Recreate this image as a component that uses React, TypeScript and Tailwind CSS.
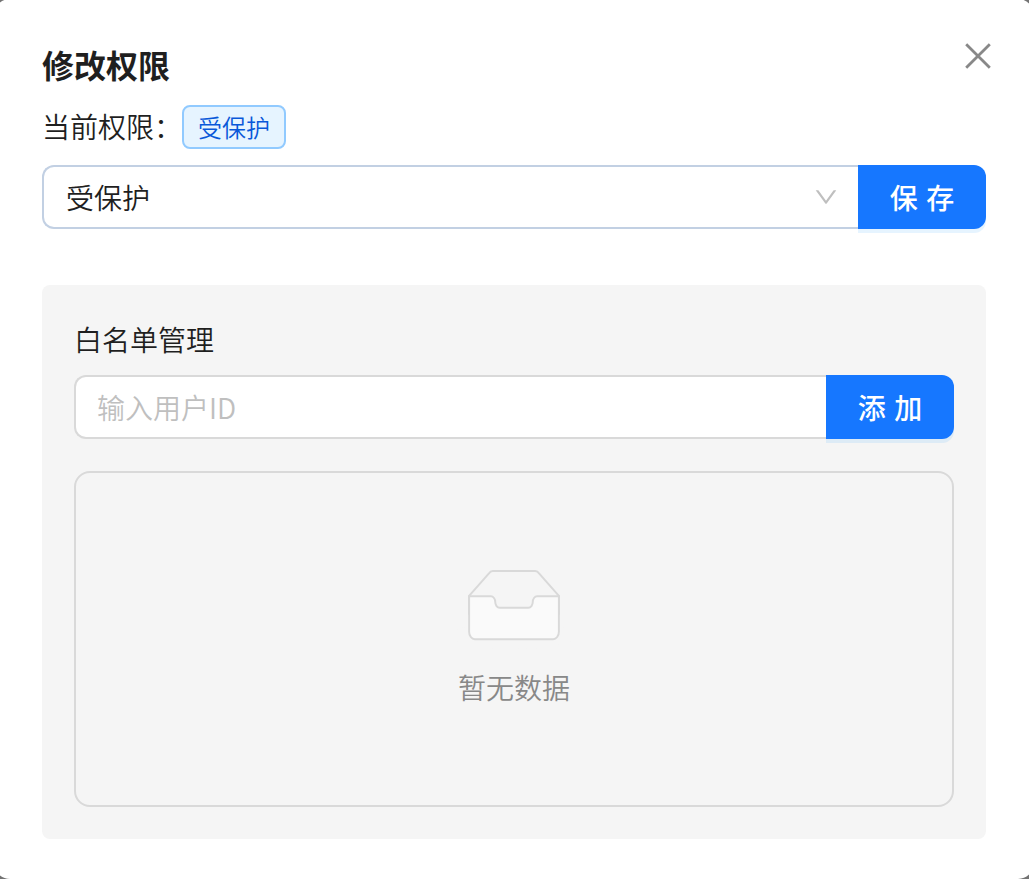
import type { ReactNode } from "react";

const PrimaryButton = ({ children }: { children: ReactNode }) => (
  <button className="w-32 h-16 shrink-0 rounded-r-xl bg-[#1677ff] pt-0.5 text-white text-[28px] leading-[44px] font-medium whitespace-nowrap [word-spacing:1px] shadow-[0_4px_0_rgba(5,145,255,0.1)]">
    {children}
  </button>
);

const CloseIcon = () => (
  <svg className="w-7 h-7" viewBox="0 0 28 28" fill="none" stroke="#888888" strokeWidth="2.8">
    <path d="M2.2 2.2 25.8 25.8M25.8 2.2 2.2 25.8" />
  </svg>
);

const DownIcon = () => (
  <svg className="w-6 h-6" viewBox="64 64 896 896" fill="#bfbfbf">
    <path d="M884 256h-75c-5.100 0-9.900 2.500-12.900 6.600L512 654.200 227.900 262.600c-3-4.100-7.800-6.600-12.900-6.600h-75c-6.500 0-10.300 7.400-6.500 12.700l352.600 486.100c12.800 17.600 39 17.600 51.700 0l352.600-486.100c3.900-5.300.1-12.700-6.400-12.700z" />
  </svg>
);

const EmptyIcon = () => (
  <svg className="w-32 h-20" viewBox="0 0 64 41">
    <g transform="translate(0 1)" fill="none" fillRule="evenodd">
      <ellipse fill="#f5f5f5" cx="32" cy="33" rx="32" ry="7" />
      <g fillRule="nonzero" stroke="#d9d9d9">
        <path d="M55 12.760L44.854 1.258C44.367.474 43.656 0 42.907 0H21.093c-.749 0-1.460.474-1.947 1.257L9 12.761V22h46v-9.240z" />
        <path
          d="M41.613 15.931c0-1.605.994-2.930 2.227-2.931H55v18.137C55 33.260 53.680 35 52.050 35h-40.100C10.320 35 9 33.259 9 31.137V13h11.160c1.233 0 2.227 1.323 2.227 2.928v.022c0 1.605 1.005 2.901 2.237 2.901h14.752c1.232 0 2.237-1.308 2.237-2.913v-.007z"
          fill="#fafafa"
        />
      </g>
    </g>
  </svg>
);

const App = () => {
  return (
    <div className="h-[879px] overflow-hidden bg-[#737373] font-['Open_Sans','Noto_Sans_CJK_SC',sans-serif] font-[350] text-[28px] leading-[44px] text-[#1f1f1f]">
      <div className="-ml-1.5 -mr-[5px] -mt-px h-[880px] rounded-2xl bg-white px-12">
        <div className="flex items-start justify-between pt-[43px]">
          <h2 className="text-[32px] leading-12 font-bold">修改权限</h2>
          <button className="-mr-1.5" aria-label="关闭">
            <CloseIcon />
          </button>
        </div>

        <div className="mt-[15px] flex items-center">
          <span>当前权限：</span>
          <span className="h-11 rounded-lg border-2 border-[#91caff] bg-[#e6f4ff] px-3.5 text-2xl leading-[42px] text-[#0958d9]">
            受保护
          </span>
        </div>

        <div className="mt-4 flex">
          <div className="flex h-16 flex-1 items-center justify-between rounded-l-xl border-2 border-r-0 border-[#c2d0e3] pl-[22px] pr-5">
            <span className="pt-0.5">受保护</span>
            <DownIcon />
          </div>
          <PrimaryButton>保 存</PrimaryButton>
        </div>

        {/* Whitelist */}
        <div className="mt-14 rounded-lg bg-[#f5f5f5] p-8">
          <h3 className="pt-px">白名单管理</h3>
          <div className="mt-[13px] flex">
            <input
              className="h-16 min-w-0 flex-1 rounded-l-xl border-2 border-r-0 border-[#d9d9d9] bg-white pl-[21px] font-['Noto_Sans_CJK_SC',sans-serif] placeholder:text-[#bfbfbf]"
              placeholder="输入用户ID"
            />
            <PrimaryButton>添 加</PrimaryButton>
          </div>
          <div className="mt-8 flex h-[336px] flex-col items-center rounded-2xl border-2 border-[#d9d9d9] pt-24">
            <EmptyIcon />
            <div className="mt-[17px] text-[#888888]">暂无数据</div>
          </div>
        </div>
      </div>
    </div>
  );
};

export default App;
